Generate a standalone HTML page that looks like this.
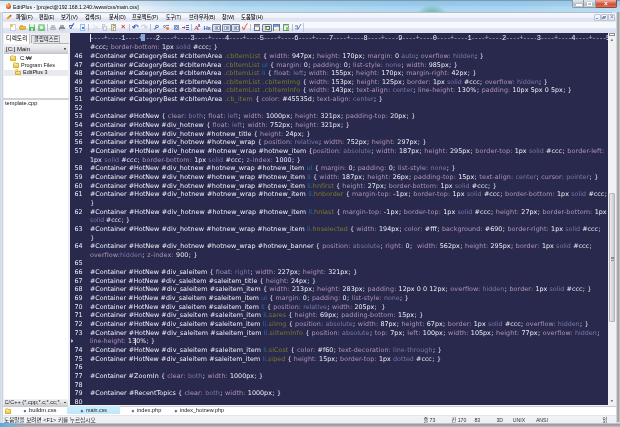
<!DOCTYPE html>
<html lang="ko">
<head>
<meta charset="utf-8">
<title>EditPlus</title>
<style>
html,body{margin:0;padding:0;}
body{width:620px;height:427px;overflow:hidden;position:relative;background:#c9dcee;font-family:"Liberation Sans","Noto Sans CJK KR","NanumGothic",sans-serif;}
.abs,.abs div,.abs span{position:absolute;}
span.nw{white-space:nowrap;}
#frame{left:0;top:0;width:620px;height:427px;background:linear-gradient(90deg,#e0ebf6 0px,#d6e7f4 140px,#acd6f0 235px,#9dceee 420px,#9fcfee 520px,#add6ef 620px);}
#frameR{left:612px;top:12px;width:8px;height:415px;background:linear-gradient(90deg,#dcdde0,#d2d3d7 4.6px,#909297 6px,#b4b6ba 7px,#c6c8cc);}
#frameB{left:0;top:422.4px;width:620px;height:5px;background:linear-gradient(#e2e4ea,#c0c2c8 1.6px,#8e9096 2.8px,#aeb0b6 3.8px,#b8bac0);}
#frameBL{left:0;top:423.4px;width:24px;height:3.6px;background:linear-gradient(90deg,#58a8d8,#6db3e0 7px,rgba(109,179,224,0));}
#frameL{left:0;top:12px;width:3.4px;height:415px;background:linear-gradient(90deg,#c6d4e2,#e4ecf4 2px,#9aa6b2 3.4px);}
#titleglow{left:0;top:0;width:170px;height:12.6px;background:linear-gradient(90deg,rgba(255,255,255,.6),rgba(255,255,255,.5) 120px,rgba(255,255,255,0));}
#title{top:2.7px;font-size:5.9px;line-height:8px;color:#000;white-space:nowrap;}
#client{left:3.4px;top:12.6px;width:612.4px;height:410.2px;background:#f0f0f0;}
#menubar{left:3.4px;top:12.6px;width:612.4px;height:9.4px;background:linear-gradient(#f6f8fd,#f1f3fa 48%,#e1e5f2 56%,#dfe3f1 90%,#e8ebf5);}
.mi{font-weight:500;top:1.9px;font-size:5.8px;line-height:7px;color:#000;white-space:nowrap;}
#toolbar{left:3.4px;top:22px;width:612.4px;height:11.2px;background:linear-gradient(#f8f9fd,#f5f7fc 52%,#e0e4f1 60%,#dde1f0);}
#left{left:3.4px;top:32.7px;width:65.2px;height:373.2px;background:#eef0f5;}
#editor{left:70px;top:33px;width:538.1px;height:372px;background:#28294d;overflow:hidden;}
#code{left:0;top:0;width:620px;height:406px;will-change:transform;}
.r{left:0;height:8.65px;line-height:8.65px;white-space:pre;font-family:"DejaVu Sans","Liberation Sans",sans-serif;font-size:6.36px;color:#efeff6;}
.r .n{left:74.5px;top:0;}
.r .t{top:0;}
.r span span,.r i{position:static;font-style:normal}
.r{word-spacing:0.034em}
.r i.s{margin:0 0.0585em}
.c{color:#7c7b2c}.e{color:#2570ae}.p{color:#b293b5}.k{color:#7a76a4}
#ruler{will-change:transform;left:89.6px;top:33.6px;height:8px;line-height:8px;font-family:"Liberation Mono",monospace;font-size:7px;letter-spacing:-0.74px;color:#b4b4cc;white-space:pre;}
#ruler b{font-weight:normal;color:#f4f4fa}
#vscroll{left:608.1px;top:32.7px;width:7.6px;height:373.2px;background:#f1f1f3;}
#tabs{left:3.4px;top:405.6px;width:612.4px;height:9.8px;background:#fff;}
#status{left:3.4px;top:415.2px;width:612.4px;height:7.6px;background:linear-gradient(#dcdee6,#f1f2f6 1.2px,#eeeff4);}
#menubar,#left,#tabs,#status,#title,#winbtn,#ticon{filter:blur(0.2px)}
</style>
</head>
<body>
<div id="frame" class="abs"></div>
<div id="titleglow" class="abs"></div>
<div class="abs" style="left:0;top:0;width:620px;height:12.4px;background:linear-gradient(rgba(60,120,180,.14),rgba(60,120,180,.05) 45%,rgba(255,255,255,.12) 60%,rgba(255,255,255,.2))"></div>
<div class="abs" style="left:418px;top:4.6px;width:28px;height:8px;background:radial-gradient(ellipse at 50% 100%,rgba(96,170,140,.75),rgba(96,170,140,.35) 45%,rgba(96,170,140,0) 72%)"></div>
<div class="abs" style="left:0;top:0;width:620px;height:0.9px;background:#7f9bb0"></div>
<div class="abs" style="left:2.6px;top:11.6px;width:614px;height:1px;background:#aebccb"></div>
<div id="frameL" class="abs"></div>
<div id="frameR" class="abs"></div>
<div id="frameB" class="abs"></div>
<div id="frameBL" class="abs"></div>
<div id="title" class="abs" style="left:12.9px;transform-origin:0 50%;transform:scaleX(0.8793)">EditPlus - [project@192.168.1.240:/www/css/main.css]</div>
<div id="ticon" class="abs" style="left:5.4px;top:3px;width:6px;height:6.4px"><div style="left:0.2px;top:1.4px;width:5.4px;height:4.6px;border-radius:50% 50% 45% 45%;background:radial-gradient(circle at 40% 35%,#f7c46a,#e0502a 60%,#b8321c)"></div><div style="left:2.6px;top:0;width:2.4px;height:2px;background:#d8a030;border-radius:50%"></div></div>
<div id="winbtn" class="abs" style="left:0;top:0;width:620px;height:12px"><div style="left:572.4px;top:0.0px;width:12.0px;height:7.8px;background:linear-gradient(#e2e7ec,#c6ced5 45%,#b5bec7 55%,#c9d1d8);border:0.6px solid #8d99a6;border-top:0;border-radius:0 0 0 2px;box-sizing:border-box"><div style="left:2.8px;top:4.0px;width:5.6px;height:1.6px;background:#fff;box-shadow:0 0 0.8px #4a545e"></div></div><div style="left:584.4px;top:0.0px;width:11.6px;height:7.8px;background:linear-gradient(#e2e7ec,#c6ced5 45%,#b5bec7 55%,#c9d1d8);border:0.6px solid #8d99a6;border-top:0;border-left:0;box-sizing:border-box"><div style="left:2.8px;top:2.0px;width:5.2px;height:3.8px;border:1px solid #fff;box-shadow:0 0 0.8px #4a545e;box-sizing:border-box"></div></div><div style="left:596.0px;top:0.0px;width:20.6px;height:7.8px;background:linear-gradient(#ecb4a8,#dc6a52 45%,#cf4a30 55%,#da7056);border:0.6px solid #8a4a40;border-top:0;border-left:0;border-radius:0 0 2px 0;box-sizing:border-box"><span style="left:8px;top:-0.4px;font-size:6.4px;line-height:8px;color:#fff;font-weight:bold;font-family:'Liberation Sans',sans-serif">×</span></div></div>
<div id="client" class="abs"></div>
<div id="menubar" class="abs">
<div style="left:2.6px;top:1.6px;width:6.0px;height:6.4px;"><div style="left:0.0px;top:2.2px;width:6.2px;height:2.0px;background:linear-gradient(90deg,#f0b040,#e08830 60%,#b05020);transform:rotate(-42deg);border-radius:1px"></div></div><span class="mi" style="left:13.0px;transform-origin:0 50%;transform:scaleX(0.9238)">파일(F)</span><span class="mi" style="left:36.0px;transform-origin:0 50%;transform:scaleX(0.8421)">편집(E)</span><span class="mi" style="left:57.8px;transform-origin:0 50%;transform:scaleX(0.9127)">보기(V)</span><span class="mi" style="left:82.1px;transform-origin:0 50%;transform:scaleX(0.8801)">검색(S)</span><span class="mi" style="left:105.2px;transform-origin:0 50%;transform:scaleX(0.8975)">문서(D)</span><span class="mi" style="left:129.1px;transform-origin:0 50%;transform:scaleX(0.9015)">프로젝트(P)</span><span class="mi" style="left:162.6px;transform-origin:0 50%;transform:scaleX(0.8297)">도구(T)</span><span class="mi" style="left:185.3px;transform-origin:0 50%;transform:scaleX(0.9049)">브라우저(B)</span><span class="mi" style="left:218.6px;transform-origin:0 50%;transform:scaleX(0.8520)">창(W)</span><span class="mi" style="left:237.6px;transform-origin:0 50%;transform:scaleX(0.9149)">도움말(H)</span><div style="left:590.2px;top:1.4px;width:7.0px;height:7.0px;background:linear-gradient(#fafbfe,#dfe6f2);border:0.5px solid #b8c4d8;box-sizing:border-box;border-radius:1px"></div><div style="left:597.6px;top:1.4px;width:7.0px;height:7.0px;background:linear-gradient(#fafbfe,#dfe6f2);border:0.5px solid #b8c4d8;box-sizing:border-box;border-radius:1px"></div><div style="left:605.0px;top:1.4px;width:7.0px;height:7.0px;background:linear-gradient(#fafbfe,#dfe6f2);border:0.5px solid #b8c4d8;box-sizing:border-box;border-radius:1px"></div><div style="left:592.2px;top:5.8px;width:2.6px;height:0.9px;background:#8a98b4"></div><div style="left:599.8px;top:3.4px;width:2.6px;height:2.4px;border:0.7px solid #8a98b4;box-sizing:border-box"></div><div style="left:599.0px;top:4.4px;width:2.6px;height:2.4px;border:0.7px solid #8a98b4;box-sizing:border-box;background:#eef"></div><span style="left:606.6px;top:0.9px;font-size:6.4px;line-height:7px;color:#8a98b4;font-weight:bold">×</span>
</div>
<div id="toolbar" class="abs"><div id="tbi" style="left:0;top:0;width:612px;height:11px;filter:blur(0.3px)">
<div style="left:1.2px;top:2.0px;width:0.8px;height:7.4px;background:repeating-linear-gradient(#a8b0c4 0 0.7px,transparent 0.7px 1.6px)"></div><div style="left:6.8px;top:2.4px;width:5.4px;height:6.6px;background:#fff;border:0.5px solid #ccd0dc;box-sizing:border-box"><div style="left:-1.2px;top:-1.0px;width:2.8px;height:2.8px;background:#f2c23c;border-radius:50%"></div></div><div style="left:16.0px;top:2.4px;width:6.6px;height:6.6px;"><div style="left:0.0px;top:1.4px;width:6.6px;height:4.6px;background:linear-gradient(#f6d860,#d9a520);border-radius:1px;border:0.4px solid #d4a838;box-sizing:border-box"></div><div style="left:0.4px;top:0.4px;width:3.0px;height:1.6px;background:#e2b030;border-radius:1px 1px 0 0"></div></div><div style="left:25.6px;top:2.4px;width:6.4px;height:6.6px;background:linear-gradient(#7fcf84,#49a854);border-radius:1px"><div style="left:1.4px;top:0.0px;width:3.4px;height:2.4px;background:#e4f4e4"></div><div style="left:1.8px;top:4.0px;width:2.6px;height:2.4px;background:#c4e4c6"></div></div><div style="left:34.6px;top:2.4px;width:6.8px;height:6.6px;background:linear-gradient(#a4dca6,#6cbc74);border-radius:1px"><div style="left:1.6px;top:1.4px;width:3.6px;height:3.6px;background:#eef8ee;border-radius:1px"></div></div><div style="left:43.3px;top:2.0px;width:0.7px;height:7.4px;background:#b9c0d0"></div><div style="left:46.2px;top:2.4px;width:6.4px;height:6.6px;"><div style="left:0.4px;top:2.4px;width:5.8px;height:3.0px;background:#c9ccd6;border:0.4px solid #aeb2c0;box-sizing:border-box;border-radius:1px"></div><div style="left:1.4px;top:0.6px;width:3.6px;height:2.0px;background:#f4f4f8;border:0.3px solid #c4c4cc;box-sizing:border-box"></div></div><div style="left:55.6px;top:2.4px;width:6.8px;height:6.6px;"><div style="left:0.4px;top:2.2px;width:6.0px;height:3.4px;background:#8d909c;border:0.4px solid #7a7e8c;box-sizing:border-box;border-radius:1px"></div><div style="left:1.4px;top:0.4px;width:3.8px;height:2.2px;background:#e8e8ee;border:0.3px solid #aaa;box-sizing:border-box"></div><div style="left:1.0px;top:5.0px;width:4.6px;height:1.2px;background:#d8d8de"></div></div><div style="left:65.4px;top:2.4px;width:7.0px;height:6.6px;"><span style="left:0.2px;top:-1.6px;font-size:7.4px;line-height:8px;font-weight:bold;color:#2a50b0">✓</span><div style="left:0.0px;top:0.4px;width:4.4px;height:1.6px;background:#3a66c4;border-radius:1px"></div></div><div style="left:76.2px;top:2.4px;width:5.8px;height:6.6px;background:#eaf2fc;border:0.9px solid #9cc0ec;box-sizing:border-box"><div style="left:1.2px;top:1.4px;width:1.8px;height:2.4px;background:#4a86d8"></div></div><div style="left:84.5px;top:2.0px;width:0.7px;height:7.4px;background:#b9c0d0"></div><div style="left:89.6px;top:2.4px;width:4.0px;height:6.6px;opacity:.45"><span style="left:0;top:-1px;font-size:6px;line-height:8px;color:#8a90a8">✂</span></div><div style="left:98.2px;top:2.4px;width:5.4px;height:6.6px;opacity:.5"><div style="left:0.0px;top:0.0px;width:3.4px;height:4.4px;border:0.5px solid #9aa0b8;box-sizing:border-box;background:#f4f6fb"></div><div style="left:1.8px;top:1.8px;width:3.4px;height:4.4px;border:0.5px solid #9aa0b8;box-sizing:border-box;background:#f4f6fb"></div></div><div style="left:107.4px;top:2.4px;width:5.6px;height:6.6px;background:#efe6c0;border:0.6px solid #b8aa74;box-sizing:border-box;border-radius:0.6px"><div style="left:1.0px;top:-0.8px;width:2.6px;height:1.4px;background:#9a9a8a"></div><div style="left:1.0px;top:1.6px;width:3.2px;height:3.6px;background:#fff;border:0.3px solid #aaa;box-sizing:border-box"></div></div><div style="left:117.4px;top:2.4px;width:5.4px;height:6.6px;"><span style="left:0.2px;top:-1.2px;font-size:7.6px;line-height:8px;font-weight:bold;color:#d43a3a">×</span></div><div style="left:125.5px;top:2.0px;width:0.7px;height:7.4px;background:#b9c0d0"></div><div style="left:128.6px;top:2.4px;width:5.8px;height:6.6px;"><span style="left:-0.2px;top:-1.4px;font-size:8px;line-height:8px;font-weight:bold;color:#2a60c0;margin-top:0.8px">↶</span></div><div style="left:138.2px;top:2.4px;width:5.8px;height:6.6px;opacity:.5"><span style="left:-0.2px;top:-1.4px;font-size:8px;line-height:8px;font-weight:bold;color:#9aa4b8;margin-top:0.8px">↷</span></div><div style="left:147.1px;top:2.0px;width:0.7px;height:7.4px;background:#b9c0d0"></div><div style="left:150.4px;top:2.4px;width:5.2px;height:6.6px;"><div style="left:1.6px;top:0.2px;width:3.4px;height:3.4px;border:0.9px solid #3a66b8;border-radius:50%;box-sizing:border-box;background:#dfeaf8"></div><div style="left:0.2px;top:4.0px;width:2.6px;height:1.0px;background:#3a66b8;transform:rotate(-45deg)"></div></div><div style="left:159.6px;top:2.4px;width:6.2px;height:6.6px;"><div style="left:0.0px;top:0.4px;width:3.0px;height:3.0px;border:0.8px solid #4a76c0;border-radius:50%;box-sizing:border-box"></div><div style="left:2.6px;top:2.6px;width:3.4px;height:3.2px;background:#e8883a;border-radius:1px"></div><div style="left:3.4px;top:0.6px;width:2.4px;height:1.0px;background:#5a86d0"></div></div><div style="left:169.8px;top:2.4px;width:5.8px;height:6.6px;"><div style="left:0.6px;top:0.6px;width:5.0px;height:5.4px;background:#dfe8f6;border:0.5px solid #7a96c8;box-sizing:border-box"></div><div style="left:2.0px;top:2.0px;width:2.6px;height:2.6px;border:0.7px solid #4a76c0;border-radius:50%;box-sizing:border-box"></div></div><div style="left:179.0px;top:2.4px;width:6.6px;height:6.6px;"><div style="left:0.0px;top:2.6px;width:3.0px;height:1.0px;background:#d04040"></div><div style="left:1.6px;top:1.6px;width:1.6px;height:3.0px;background:#d04040;clip-path:polygon(0 0,100% 50%,0 100%)"></div><div style="left:3.8px;top:0.6px;width:2.8px;height:0.8px;background:#4a66b0"></div><div style="left:3.8px;top:2.6px;width:2.8px;height:0.8px;background:#4a66b0"></div><div style="left:3.8px;top:4.6px;width:2.8px;height:0.8px;background:#4a66b0"></div></div><div style="left:187.7px;top:2.0px;width:0.7px;height:7.4px;background:#b9c0d0"></div><div style="left:190.6px;top:2.4px;width:5.8px;height:6.6px;"><span style="left:0;top:-0.6px;font-size:7px;line-height:8px;font-weight:bold;color:#d0405a;font-family:'Liberation Serif',serif">A</span><span style="left:3.8px;top:-2px;font-size:4.6px;line-height:8px;font-weight:bold;color:#3a5ab8">a</span></div><div style="left:200.2px;top:2.4px;width:6.6px;height:6.6px;"><span style="left:0;top:-0.4px;font-size:6px;line-height:8px;font-weight:bold;color:#3a5ab8;letter-spacing:-0.4px">Hx</span></div><div style="left:208.7px;top:1.6px;width:9.2px;height:8.0px;background:linear-gradient(#dfe6f6,#cfd9ee);border:0.8px solid #6e7890;box-sizing:border-box;border-radius:1px"><div style="left:1.6px;top:1.2px;width:5.0px;height:4.4px;background:#f6f8fc;border:0.5px solid #a4aec6;box-sizing:border-box"></div><div style="left:3.0px;top:2.6px;width:2.2px;height:1.6px;background:#8a96b4"></div></div><div style="left:218.2px;top:1.6px;width:9.2px;height:8.0px;background:linear-gradient(#dfe6f6,#cfd9ee);border:0.8px solid #6e7890;box-sizing:border-box;border-radius:1px"><div style="left:1.6px;top:1.2px;width:5.0px;height:4.4px;background:#f6f8fc;border:0.5px solid #a4aec6;box-sizing:border-box"></div><div style="left:3.0px;top:2.6px;width:2.2px;height:1.6px;background:#8a96b4"></div></div><div style="left:227.8px;top:1.6px;width:9.2px;height:8.0px;background:linear-gradient(#dfe6f6,#cfd9ee);border:0.8px solid #6e7890;box-sizing:border-box;border-radius:1px"><div style="left:1.6px;top:1.2px;width:5.0px;height:4.4px;background:#f6f8fc;border:0.5px solid #a4aec6;box-sizing:border-box"></div><div style="left:3.0px;top:2.6px;width:2.2px;height:1.6px;background:#8a96b4"></div></div><div style="left:238.8px;top:2.4px;width:6.4px;height:6.6px;"><span style="left:-0.4px;top:-1.4px;font-size:8.6px;line-height:8px;font-weight:bold;color:#e0562a">✓</span></div><div style="left:247.1px;top:2.0px;width:0.7px;height:7.4px;background:#b9c0d0"></div><div style="left:250.4px;top:2.4px;width:6.6px;height:6.6px;background:#fbf6d8;border:0.7px solid #6a7088;box-sizing:border-box"><div style="left:0.0px;top:0.0px;width:5.2px;height:1.2px;background:#9aa8c8"></div></div><div style="left:258.9px;top:1.6px;width:9.3px;height:8.0px;background:linear-gradient(#dfe6f6,#cfd9ee);border:0.8px solid #6e7890;box-sizing:border-box;border-radius:1px"><div style="left:1.4px;top:1.2px;width:5.4px;height:4.6px;background:#f4f2c8;border:0.6px solid #5a6a54;box-sizing:border-box"></div><div style="left:2.0px;top:2.6px;width:2.0px;height:2.6px;background:#7ab86a"></div></div><div style="left:269.8px;top:2.4px;width:6.4px;height:6.6px;background:#fbf6d8;border:0.7px solid #5a78b8;box-sizing:border-box"><div style="left:0.0px;top:0.0px;width:5.2px;height:1.4px;background:#7aa0e0"></div><div style="left:0.0px;top:4.0px;width:5.2px;height:1.4px;background:#f0e0a0"></div></div><div style="left:279.4px;top:2.4px;width:6.6px;height:6.6px;background:#eef8e4;border:0.7px solid #6a9a6a;box-sizing:border-box"><div style="left:2.6px;top:1.4px;width:2.2px;height:2.8px;background:#86c886"></div><div style="left:0.0px;top:0.0px;width:5.2px;height:1.0px;background:#b8d8b0"></div></div><div style="left:288.3px;top:2.0px;width:0.7px;height:7.4px;background:#b9c0d0"></div><div style="left:291.2px;top:2.4px;width:6.0px;height:6.6px;"><div style="left:0.0px;top:0.4px;width:3.0px;height:2.4px;background:#a8b4d0"></div><div style="left:0.0px;top:3.4px;width:3.0px;height:2.4px;background:#a8b4d0"></div><span style="left:2.2px;top:-1.2px;font-size:6.4px;line-height:8px;font-weight:bold;color:#3a5ab8">✓</span></div><div style="left:300.0px;top:1.2px;width:0.6px;height:8.6px;background:#c4cada"></div>
</div></div>
<div id="left" class="abs">
<div style="left:0.0px;top:0.0px;width:65.2px;height:11.6px;background:#ecedf1"></div><div style="left:0.8px;top:0.9px;width:25.8px;height:10.6px;background:#fff;border-right:0.6px solid #c4c6cc;box-sizing:border-box"><span class="nw" style="left:1.9px;top:1.4px;font-size:5.8px;line-height:7px;color:#000;transform-origin:0 50%;transform:scaleX(1.0120)">디렉토리</span></div><div style="left:27.8px;top:2.7px;width:29.2px;height:8.0px;background:#e6e6ea;border:0.6px solid #a8aab2;border-bottom:0;box-sizing:border-box"><span class="nw" style="left:1.6px;top:-0.4px;font-size:5.8px;line-height:7px;color:#111;transform-origin:0 50%;transform:scaleX(0.9223)">클립텍스트</span></div><div style="left:30.0px;top:10.7px;width:35.2px;height:0.6px;background:#b4b6be"></div><div style="left:0.4px;top:11.5px;width:64.6px;height:9.4px;background:linear-gradient(#f3f3f5,#e6e6ea 45%,#d2d2d7 80%,#c2c2c8)"><span class="nw" style="left:2px;top:0.7px;font-size:6.2px;line-height:7px;color:#111;transform-origin:0 50%;transform:scaleX(0.9691)">[C:] Main</span><div style="left:59.8px;top:4.0px;width:2.8px;height:1.7px;background:#222;clip-path:polygon(0 0,100% 0,50% 100%)"></div></div><div style="left:0.4px;top:20.9px;width:64.6px;height:44.0px;background:#fff"></div><div style="left:0.6px;top:36.9px;width:64.2px;height:6.4px;background:#e9eaee"></div><div style="left:7.0px;top:22.3px;width:5.8px;height:6.0px;"><div style="left:0.0px;top:1.2px;width:5.8px;height:4.8px;background:linear-gradient(#fbe98a,#e9c84a);border-radius:0.8px;border:0.3px solid #d4b040;box-sizing:border-box"></div><div style="left:0.2px;top:0.0px;width:3.0px;height:2.0px;background:#f3d870;border-radius:0.8px 0.8px 0 0"></div></div><span class="nw" style="left:16.3px;top:21.1px;font-size:6.1px;line-height:7px;color:#111;transform-origin:0 50%;transform:scaleX(0.9866)">C:₩</span><div style="left:9.4px;top:29.1px;width:5.8px;height:6.0px;"><div style="left:0.0px;top:1.2px;width:5.8px;height:4.8px;background:linear-gradient(#fbe98a,#e9c84a);border-radius:0.8px;border:0.3px solid #d4b040;box-sizing:border-box"></div><div style="left:0.2px;top:0.0px;width:3.0px;height:2.0px;background:#f3d870;border-radius:0.8px 0.8px 0 0"></div></div><span class="nw" style="left:18.1px;top:28.0px;font-size:6.1px;line-height:7px;color:#111;transform-origin:0 50%;transform:scaleX(0.8962)">Program Files</span><div style="left:11.6px;top:36.7px;width:5.8px;height:6.0px;"><div style="left:0.0px;top:1.2px;width:5.8px;height:4.8px;background:linear-gradient(#fbe98a,#e9c84a);border-radius:0.8px;border:0.3px solid #d4b040;box-sizing:border-box"></div><div style="left:0.2px;top:0.0px;width:3.0px;height:2.0px;background:#f3d870;border-radius:0.8px 0.8px 0 0"></div></div><span class="nw" style="left:20.0px;top:35.5px;font-size:6.1px;line-height:7px;color:#111;transform-origin:0 50%;transform:scaleX(0.8929)">EditPlus 3</span><div style="left:0.0px;top:64.9px;width:65.2px;height:2.4px;background:#d0d2d8"></div><div style="left:0.4px;top:67.3px;width:64.6px;height:299.2px;background:#fff"></div><span class="nw" style="left:1.2px;top:66.4px;font-size:6.1px;line-height:7px;color:#111;transform-origin:0 50%;transform:scaleX(0.9258)">template.cpp</span><div style="left:0.4px;top:366.5px;width:64.6px;height:6.6px;background:linear-gradient(#f3f3f5,#e2e2e6 50%,#cdcdd2)"><span class="nw" style="left:0.8px;top:-0.2px;font-size:5.6px;line-height:7px;color:#222;width:58px;overflow:hidden">C/C++ (*.cpp;*.c;*.cc;*.</span><div style="left:59.8px;top:2.6px;width:2.8px;height:1.7px;background:#222;clip-path:polygon(0 0,100% 0,50% 100%)"></div></div>
</div>
<div id="editor" class="abs"></div>
<div id="ruler" class="abs">----+----<b>1</b>----+----<b>2</b>----+----<b>3</b>----+----<b>4</b>----+----<b>5</b>----+----<b>6</b>----+----<b>7</b>----+----<b>8</b>----+----<b>9</b>----+----<b>0</b>----+----<b>1</b>----+----<b>2</b>----+----<b>3</b>----+----<b>4</b>----+----<b>5</b></div>
<div id="rhl" class="abs" style="left:141.4px;top:34.2px;width:3.2px;height:7px;background:#7fa8dc"></div>
<div id="rvl" class="abs" style="left:89.6px;top:33.6px;width:0.8px;height:8.2px;background:#e8e8f0"></div>
<div id="mark" class="abs" style="left:71.2px;top:339px;width:2.2px;height:3.8px;background:#dcdcec;clip-path:polygon(0 0,100% 50%,0 100%)"></div>
<div id="ibeam" class="abs" style="left:135.4px;top:337.6px;width:0.8px;height:7px;background:#c8c8dc"></div>
<div id="code" class="abs">
<div class="r" style="top:43.20px"> <span class="t" style="left:90.2px;transform-origin:0 50%;transform:scaleX(0.9932)">#ccc<i class="s">;</i> <span class="p" style="letter-spacing:0.0150em">border-bottom:</span> 1px <span class="k">solid</span> #ccc<i class="s">;</i> }</span></div>
<div class="r" style="top:51.85px"><span class="n">46</span> <span class="t" style="left:90.2px;transform-origin:0 50%;transform:scaleX(1.0004)">#Container #CategoryBest <span style="letter-spacing:0.0115em">#cbItemArea</span> <span class="c" style="letter-spacing:0.0156em">.cbItemList</span> { <span class="p" style="letter-spacing:0.0195em">width:</span> 947px<i class="s">;</i> <span class="p" style="letter-spacing:0.0167em">height:</span> 170px<i class="s">;</i> <span class="p" style="letter-spacing:0.0167em">margin:</span> 0 <span class="k">auto</span><i class="s">;</i> <span class="p" style="letter-spacing:0.0130em">overflow:</span> <span class="k">hidden</span><i class="s">;</i> }</span></div>
<div class="r" style="top:60.50px"><span class="n">47</span> <span class="t" style="left:90.2px;transform-origin:0 50%;transform:scaleX(0.9953)">#Container #CategoryBest <span style="letter-spacing:0.0115em">#cbItemArea</span> <span class="c" style="letter-spacing:0.0156em">.cbItemList</span> <span class="e">ul</span> { <span class="p" style="letter-spacing:0.0167em">margin:</span> 0<i class="s">;</i> <span class="p" style="letter-spacing:0.0146em">padding:</span> 0<i class="s">;</i> <span class="p" style="letter-spacing:0.0191em">list-style:</span> <span class="k">none</span><i class="s">;</i> <span class="p" style="letter-spacing:0.0195em">width:</span> 985px<i class="s">;</i> }</span></div>
<div class="r" style="top:69.15px"><span class="n">48</span> <span class="t" style="left:90.2px;transform-origin:0 50%;transform:scaleX(0.9946)">#Container #CategoryBest <span style="letter-spacing:0.0115em">#cbItemArea</span> <span class="c" style="letter-spacing:0.0156em">.cbItemList</span> <span class="e">li</span> { <span class="p" style="letter-spacing:0.0195em">float:</span> <span class="k">left</span><i class="s">;</i> <span class="p" style="letter-spacing:0.0195em">width:</span> 155px<i class="s">;</i> <span class="p" style="letter-spacing:0.0167em">height:</span> 170px<i class="s">;</i> <span class="p" style="letter-spacing:0.0162em">margin-right:</span> 42px<i class="s">;</i> }</span></div>
<div class="r" style="top:77.80px"><span class="n">49</span> <span class="t" style="left:90.2px;transform-origin:0 50%;transform:scaleX(0.9978)">#Container #CategoryBest <span style="letter-spacing:0.0115em">#cbItemArea</span> <span class="c" style="letter-spacing:0.0156em">.cbItemList</span> <span class="c" style="letter-spacing:0.0298em">.cbItemImg</span> { <span class="p" style="letter-spacing:0.0195em">width:</span> 153px<i class="s">;</i> <span class="p" style="letter-spacing:0.0167em">height:</span> 125px<i class="s">;</i> <span class="p" style="letter-spacing:0.0167em">border:</span> 1px <span class="k">solid</span> #ccc<i class="s">;</i> <span class="p" style="letter-spacing:0.0130em">overflow:</span> <span class="k">hidden</span><i class="s">;</i> }</span></div>
<div class="r" style="top:86.45px"><span class="n">50</span> <span class="t" style="left:90.2px;transform-origin:0 50%;transform:scaleX(0.9974)">#Container #CategoryBest <span style="letter-spacing:0.0115em">#cbItemArea</span> <span class="c" style="letter-spacing:0.0156em">.cbItemList</span> <span class="c" style="letter-spacing:0.0271em">.cbItemInfo</span> { <span class="p" style="letter-spacing:0.0195em">width:</span> 143px<i class="s">;</i> <span class="p" style="letter-spacing:0.0191em">text-align:</span> <span class="k">center</span><i class="s">;</i> <span class="p" style="letter-spacing:0.0175em">line-height:</span> <span style="letter-spacing:0.0315em">130%</span><i class="s">;</i> <span class="p" style="letter-spacing:0.0146em">padding:</span> 10px 5px 0 5px<i class="s">;</i> }</span></div>
<div class="r" style="top:95.10px"><span class="n">51</span> <span class="t" style="left:90.2px;transform-origin:0 50%;transform:scaleX(1.0017)">#Container #CategoryBest <span style="letter-spacing:0.0115em">#cbItemArea</span> <span class="c" style="letter-spacing:0.0227em">.cb_item</span> { <span class="p" style="letter-spacing:0.0195em">color:</span> #45535d<i class="s">;</i> <span class="p" style="letter-spacing:0.0191em">text-align:</span> <span class="k">center</span><i class="s">;</i> }</span></div>
<div class="r" style="top:103.75px"><span class="n">52</span> <span class="t" style="left:90.2px"></span></div>
<div class="r" style="top:112.40px"><span class="n">53</span> <span class="t" style="left:90.2px;transform-origin:0 50%;transform:scaleX(1.0030)">#Container #HotNew { <span class="p" style="letter-spacing:0.0195em">clear:</span> <span class="k">both</span><i class="s">;</i> <span class="p" style="letter-spacing:0.0195em">float:</span> <span class="k">left</span><i class="s">;</i> <span class="p" style="letter-spacing:0.0195em">width:</span> 1000px<i class="s">;</i> <span class="p" style="letter-spacing:0.0167em">height:</span> 321px<i class="s">;</i> <span class="p" style="letter-spacing:0.0175em">padding-top:</span> 20px<i class="s">;</i> }</span></div>
<div class="r" style="top:121.05px"><span class="n">54</span> <span class="t" style="left:90.2px;transform-origin:0 50%;transform:scaleX(1.0014)">#Container #HotNew <span style="letter-spacing:0.0124em">#div_hotnew</span> { <span class="p" style="letter-spacing:0.0195em">float:</span> <span class="k">left</span><i class="s">;</i> <span class="p" style="letter-spacing:0.0195em">width:</span> 752px<i class="s">;</i> <span class="p" style="letter-spacing:0.0167em">height:</span> 321px<i class="s">;</i> }</span></div>
<div class="r" style="top:129.70px"><span class="n">55</span> <span class="t" style="left:90.2px;transform-origin:0 50%;transform:scaleX(1.0000)">#Container #HotNew <span style="letter-spacing:0.0124em">#div_hotnew</span> <span style="letter-spacing:0.0105em">#hotnew_title</span> { <span class="p" style="letter-spacing:0.0167em">height:</span> 24px<i class="s">;</i> }</span></div>
<div class="r" style="top:138.35px"><span class="n">56</span> <span class="t" style="left:90.2px;transform-origin:0 50%;transform:scaleX(1.0049)">#Container #HotNew <span style="letter-spacing:0.0124em">#div_hotnew</span> <span style="letter-spacing:0.0113em">#hotnew_wrap</span> { <span class="p" style="letter-spacing:0.0130em">position:</span> <span class="k">relative</span><i class="s">;</i> <span class="p" style="letter-spacing:0.0195em">width:</span> 752px<i class="s">;</i> <span class="p" style="letter-spacing:0.0167em">height:</span> 297px<i class="s">;</i> }</span></div>
<div class="r" style="top:147.00px"><span class="n">57</span> <span class="t" style="left:90.2px;transform-origin:0 50%;transform:scaleX(1.0097)">#Container #HotNew <span style="letter-spacing:0.0124em">#div_hotnew</span> <span style="letter-spacing:0.0113em">#hotnew_wrap</span> <span style="letter-spacing:0.0113em">#hotnew_item</span> {<span class="p" style="letter-spacing:0.0130em">position:</span> <span class="k">absolute</span><i class="s">;</i> <span class="p" style="letter-spacing:0.0195em">width:</span> 187px<i class="s">;</i> <span class="p" style="letter-spacing:0.0167em">height:</span> 295px<i class="s">;</i> <span class="p" style="letter-spacing:0.0191em">border-top:</span> 1px <span class="k">solid</span> #ccc<i class="s">;</i> <span class="p" style="letter-spacing:0.0175em">border-left:</span></span></div>
<div class="r" style="top:155.65px"> <span class="t" style="left:90.2px;transform-origin:0 50%;transform:scaleX(1.0046)">1px <span class="k">solid</span> #ccc<i class="s">;</i> <span class="p" style="letter-spacing:0.0150em">border-bottom:</span> 1px <span class="k">solid</span> #ccc<i class="s">;</i> <span class="p" style="letter-spacing:0.0263em">z-index:</span> 1000<i class="s">;</i> }</span></div>
<div class="r" style="top:164.30px"><span class="n">58</span> <span class="t" style="left:90.2px;transform-origin:0 50%;transform:scaleX(1.0004)">#Container #HotNew <span style="letter-spacing:0.0124em">#div_hotnew</span> <span style="letter-spacing:0.0113em">#hotnew_wrap</span> <span style="letter-spacing:0.0113em">#hotnew_item</span> <span class="e">ul</span> { <span class="p" style="letter-spacing:0.0167em">margin:</span> 0<i class="s">;</i> <span class="p" style="letter-spacing:0.0146em">padding:</span> 0<i class="s">;</i> <span class="p" style="letter-spacing:0.0191em">list-style:</span> <span class="k">none</span><i class="s">;</i> }</span></div>
<div class="r" style="top:172.95px"><span class="n">59</span> <span class="t" style="left:90.2px;transform-origin:0 50%;transform:scaleX(1.0032)">#Container #HotNew <span style="letter-spacing:0.0124em">#div_hotnew</span> <span style="letter-spacing:0.0113em">#hotnew_wrap</span> <span style="letter-spacing:0.0113em">#hotnew_item</span> <span class="e">li</span> { <span class="p" style="letter-spacing:0.0195em">width:</span> 187px<i class="s">;</i> <span class="p" style="letter-spacing:0.0167em">height:</span> 26px<i class="s">;</i> <span class="p" style="letter-spacing:0.0175em">padding-top:</span> 15px<i class="s">;</i> <span class="p" style="letter-spacing:0.0191em">text-align:</span> <span class="k">center</span><i class="s">;</i> <span class="p" style="letter-spacing:0.0167em">cursor:</span> <span class="k">pointer</span><i class="s">;</i> }</span></div>
<div class="r" style="top:181.60px"><span class="n">60</span> <span class="t" style="left:90.2px;transform-origin:0 50%;transform:scaleX(1.0033)">#Container #HotNew <span style="letter-spacing:0.0124em">#div_hotnew</span> <span style="letter-spacing:0.0113em">#hotnew_wrap</span> <span style="letter-spacing:0.0113em">#hotnew_item</span> <span class="e">li</span><span class="c" style="letter-spacing:0.0057em">.hnfirst</span> { <span class="p" style="letter-spacing:0.0167em">height:</span> 27px<i class="s">;</i> <span class="p" style="letter-spacing:0.0150em">border-bottom:</span> 1px <span class="k">solid</span> #ccc<i class="s">;</i> }</span></div>
<div class="r" style="top:190.25px"><span class="n">61</span> <span class="t" style="left:90.2px;transform-origin:0 50%;transform:scaleX(1.0078)">#Container #HotNew <span style="letter-spacing:0.0124em">#div_hotnew</span> <span style="letter-spacing:0.0113em">#hotnew_wrap</span> <span style="letter-spacing:0.0113em">#hotnew_item</span> <span class="e">li</span><span class="c" style="letter-spacing:0.0051em">.hnborder</span> { <span class="p" style="letter-spacing:0.0191em">margin-top:</span> <span style="letter-spacing:0.0232em">-1px</span><i class="s">;</i> <span class="p" style="letter-spacing:0.0191em">border-top:</span> 1px <span class="k">solid</span> #ccc<i class="s">;</i> <span class="p" style="letter-spacing:0.0150em">border-bottom:</span> 1px <span class="k">solid</span> #ccc<i class="s">;</i></span></div>
<div class="r" style="top:198.90px"> <span class="t" style="left:90.2px">}</span></div>
<div class="r" style="top:207.55px"><span class="n">62</span> <span class="t" style="left:90.2px;transform-origin:0 50%;transform:scaleX(1.0086)">#Container #HotNew <span style="letter-spacing:0.0124em">#div_hotnew</span> <span style="letter-spacing:0.0113em">#hotnew_wrap</span> <span style="letter-spacing:0.0113em">#hotnew_item</span> <span class="e">li</span><span class="c" style="letter-spacing:0.0066em">.hnlast</span> { <span class="p" style="letter-spacing:0.0191em">margin-top:</span> <span style="letter-spacing:0.0232em">-1px</span><i class="s">;</i> <span class="p" style="letter-spacing:0.0191em">border-top:</span> 1px <span class="k">solid</span> #ccc<i class="s">;</i> <span class="p" style="letter-spacing:0.0167em">height:</span> 27px<i class="s">;</i> <span class="p" style="letter-spacing:0.0150em">border-bottom:</span> 1px</span></div>
<div class="r" style="top:216.20px"> <span class="t" style="left:90.2px;transform-origin:0 50%;transform:scaleX(0.9473)"><span class="k">solid</span> #ccc<i class="s">;</i> }</span></div>
<div class="r" style="top:224.85px"><span class="n">63</span> <span class="t" style="left:90.2px;transform-origin:0 50%;transform:scaleX(1.0019)">#Container #HotNew <span style="letter-spacing:0.0124em">#div_hotnew</span> <span style="letter-spacing:0.0113em">#hotnew_wrap</span> <span style="letter-spacing:0.0113em">#hotnew_item</span> <span class="e">li</span><span class="c" style="letter-spacing:0.0042em">.hnselected</span> { <span class="p" style="letter-spacing:0.0195em">width:</span> 194px<i class="s">;</i> <span class="p" style="letter-spacing:0.0195em">color:</span> #fff<i class="s">;</i> <span class="p" style="letter-spacing:0.0106em">background:</span> #690<i class="s">;</i> <span class="p" style="letter-spacing:0.0162em">border-right:</span> 1px <span class="k">solid</span> #ccc<i class="s">;</i></span></div>
<div class="r" style="top:233.50px"> <span class="t" style="left:90.2px">}</span></div>
<div class="r" style="top:242.15px"><span class="n">64</span> <span class="t" style="left:90.2px;transform-origin:0 50%;transform:scaleX(1.0054)">#Container #HotNew <span style="letter-spacing:0.0124em">#div_hotnew</span> <span style="letter-spacing:0.0113em">#hotnew_wrap</span> <span style="letter-spacing:0.0097em">#hotnew_banner</span> { <span class="p" style="letter-spacing:0.0130em">position:</span> <span class="k">absolute</span><i class="s">;</i> <span class="p" style="letter-spacing:0.0195em">right:</span> 0<i class="s">;</i>  <span class="p" style="letter-spacing:0.0195em">width:</span> 562px<i class="s">;</i> <span class="p" style="letter-spacing:0.0167em">height:</span> 295px<i class="s">;</i> <span class="p" style="letter-spacing:0.0167em">border:</span> 1px <span class="k">solid</span> #ccc<i class="s">;</i></span></div>
<div class="r" style="top:250.80px"> <span class="t" style="left:90.2px;transform-origin:0 50%;transform:scaleX(1.0069)"><span class="p" style="letter-spacing:0.0130em">overflow:</span><span class="k">hidden</span><i class="s">;</i> <span class="p" style="letter-spacing:0.0263em">z-index:</span> 900<i class="s">;</i> }</span></div>
<div class="r" style="top:259.45px"><span class="n">65</span> <span class="t" style="left:90.2px"></span></div>
<div class="r" style="top:268.10px"><span class="n">66</span> <span class="t" style="left:90.2px;transform-origin:0 50%;transform:scaleX(0.9979)">#Container #HotNew <span style="letter-spacing:0.0105em">#div_saleitem</span> { <span class="p" style="letter-spacing:0.0195em">float:</span> <span class="k">right</span><i class="s">;</i> <span class="p" style="letter-spacing:0.0195em">width:</span> 227px<i class="s">;</i> <span class="p" style="letter-spacing:0.0167em">height:</span> 321px<i class="s">;</i> }</span></div>
<div class="r" style="top:276.75px"><span class="n">67</span> <span class="t" style="left:90.2px;transform-origin:0 50%;transform:scaleX(0.9917)">#Container #HotNew <span style="letter-spacing:0.0105em">#div_saleitem</span> <span style="letter-spacing:0.0091em">#saleitem_title</span> { <span class="p" style="letter-spacing:0.0167em">height:</span> 24px<i class="s">;</i> }</span></div>
<div class="r" style="top:285.40px"><span class="n">68</span> <span class="t" style="left:90.2px;transform-origin:0 50%;transform:scaleX(1.0006)">#Container #HotNew <span style="letter-spacing:0.0105em">#div_saleitem</span> <span style="letter-spacing:0.0097em">#saleitem_item</span> { <span class="p" style="letter-spacing:0.0195em">width:</span> 213px<i class="s">;</i> <span class="p" style="letter-spacing:0.0167em">height:</span> 283px<i class="s">;</i> <span class="p" style="letter-spacing:0.0146em">padding:</span> 12px 0 0 12px<i class="s">;</i> <span class="p" style="letter-spacing:0.0130em">overflow:</span> <span class="k">hidden</span><i class="s">;</i> <span class="p" style="letter-spacing:0.0167em">border:</span> 1px <span class="k">solid</span> #ccc<i class="s">;</i> }</span></div>
<div class="r" style="top:294.05px"><span class="n">69</span> <span class="t" style="left:90.2px;transform-origin:0 50%;transform:scaleX(0.9904)">#Container #HotNew <span style="letter-spacing:0.0105em">#div_saleitem</span> <span style="letter-spacing:0.0097em">#saleitem_item</span> <span class="e">ul</span> { <span class="p" style="letter-spacing:0.0167em">margin:</span> 0<i class="s">;</i> <span class="p" style="letter-spacing:0.0146em">padding:</span> 0<i class="s">;</i> <span class="p" style="letter-spacing:0.0191em">list-style:</span> <span class="k">none</span><i class="s">;</i> }</span></div>
<div class="r" style="top:302.70px"><span class="n">70</span> <span class="t" style="left:90.2px;transform-origin:0 50%;transform:scaleX(0.9899)">#Container #HotNew <span style="letter-spacing:0.0105em">#div_saleitem</span> <span style="letter-spacing:0.0097em">#saleitem_item</span> <span class="e">li</span> { <span class="p" style="letter-spacing:0.0130em">position:</span> <span class="k">relative</span><i class="s">;</i> <span class="p" style="letter-spacing:0.0195em">width:</span> 205px<i class="s">;</i>  }</span></div>
<div class="r" style="top:311.35px"><span class="n">71</span> <span class="t" style="left:90.2px;transform-origin:0 50%;transform:scaleX(1.0017)">#Container #HotNew <span style="letter-spacing:0.0105em">#div_saleitem</span> <span style="letter-spacing:0.0097em">#saleitem_item</span> <span class="e">li</span><span class="c" style="letter-spacing:0.0077em">.sares</span> { <span class="p" style="letter-spacing:0.0167em">height:</span> 69px<i class="s">;</i> <span class="p" style="letter-spacing:0.0140em">padding-bottom:</span> 15px<i class="s">;</i> }</span></div>
<div class="r" style="top:320.00px"><span class="n">72</span> <span class="t" style="left:90.2px;transform-origin:0 50%;transform:scaleX(0.9988)">#Container #HotNew <span style="letter-spacing:0.0105em">#div_saleitem</span> <span style="letter-spacing:0.0097em">#saleitem_item</span> <span class="e">li</span><span class="c" style="letter-spacing:0.0287em">.siImg</span> { <span class="p" style="letter-spacing:0.0130em">position:</span> <span class="k">absolute</span><i class="s">;</i> <span class="p" style="letter-spacing:0.0195em">width:</span> 87px<i class="s">;</i> <span class="p" style="letter-spacing:0.0167em">height:</span> 67px<i class="s">;</i> <span class="p" style="letter-spacing:0.0167em">border:</span> 1px <span class="k">solid</span> #ccc<i class="s">;</i> <span class="p" style="letter-spacing:0.0130em">overflow:</span> <span class="k">hidden</span><i class="s">;</i> }</span></div>
<div class="r" style="top:328.65px"><span class="n">73</span> <span class="t" style="left:90.2px;transform-origin:0 50%;transform:scaleX(1.0047)">#Container #HotNew <span style="letter-spacing:0.0105em">#div_saleitem</span> <span style="letter-spacing:0.0097em">#saleitem_item</span> <span class="e">li</span><span class="c" style="letter-spacing:0.0271em">.siItemInfo</span> { <span class="p" style="letter-spacing:0.0130em">position:</span> <span class="k">absolute</span><i class="s">;</i> <span class="p" style="letter-spacing:0.0293em">top:</span> 7px<i class="s">;</i> <span class="p" style="letter-spacing:0.0234em">left:</span> 100px<i class="s">;</i> <span class="p" style="letter-spacing:0.0195em">width:</span> 105px<i class="s">;</i> <span class="p" style="letter-spacing:0.0167em">height:</span> 77px<i class="s">;</i> <span class="p" style="letter-spacing:0.0130em">overflow:</span> <span class="k">hidden</span><i class="s">;</i></span></div>
<div class="r" style="top:337.30px"> <span class="t" style="left:90.2px;transform-origin:0 50%;transform:scaleX(0.9568)"><span class="p" style="letter-spacing:0.0175em">line-height:</span> <span style="letter-spacing:0.0315em">130%</span><i class="s">;</i> }</span></div>
<div class="r" style="top:345.95px"><span class="n">74</span> <span class="t" style="left:90.2px;transform-origin:0 50%;transform:scaleX(1.0015)">#Container #HotNew <span style="letter-spacing:0.0105em">#div_saleitem</span> <span style="letter-spacing:0.0097em">#saleitem_item</span> <span class="e">li</span><span class="c" style="letter-spacing:0.0066em">.siCost</span> { <span class="p" style="letter-spacing:0.0195em">color:</span> #f60<i class="s">;</i> <span class="p" style="letter-spacing:0.0131em">text-decoration:</span> <span class="k" style="letter-spacing:0.0077em">line-through</span><i class="s">;</i> }</span></div>
<div class="r" style="top:354.60px"><span class="n">75</span> <span class="t" style="left:90.2px;transform-origin:0 50%;transform:scaleX(0.9969)">#Container #HotNew <span style="letter-spacing:0.0105em">#div_saleitem</span> <span style="letter-spacing:0.0097em">#saleitem_item</span> <span class="e">li</span><span class="c" style="letter-spacing:0.0077em">.siped</span> { <span class="p" style="letter-spacing:0.0167em">height:</span> 15px<i class="s">;</i> <span class="p" style="letter-spacing:0.0191em">border-top:</span> 1px <span class="k">dotted</span> #ccc<i class="s">;</i> }</span></div>
<div class="r" style="top:363.25px"><span class="n">76</span> <span class="t" style="left:90.2px"></span></div>
<div class="r" style="top:371.90px"><span class="n">77</span> <span class="t" style="left:90.2px;transform-origin:0 50%;transform:scaleX(0.9966)">#Container <span style="letter-spacing:0.0180em">#ZoomIn</span> { <span class="p" style="letter-spacing:0.0195em">clear:</span> <span class="k">both</span><i class="s">;</i> <span class="p" style="letter-spacing:0.0195em">width:</span> 1000px<i class="s">;</i> }</span></div>
<div class="r" style="top:380.55px"><span class="n">78</span> <span class="t" style="left:90.2px"></span></div>
<div class="r" style="top:389.20px"><span class="n">79</span> <span class="t" style="left:90.2px;transform-origin:0 50%;transform:scaleX(1.0068)">#Container #RecentTopics { <span class="p" style="letter-spacing:0.0195em">clear:</span> <span class="k">both</span><i class="s">;</i> <span class="p" style="letter-spacing:0.0195em">width:</span> 1000px<i class="s">;</i> }</span></div>
<div class="r" style="top:397.85px"><span class="n">80</span> <span class="t" style="left:90.2px"></span></div>
</div>
<div id="vscroll" class="abs">
<div style="left:0.6px;top:0.6px;width:6.4px;height:2.4px;background:#fff;border:0.5px solid #8a8e9a;box-sizing:border-box"></div><div style="left:2.4px;top:6.4px;width:2.8px;height:1.7px;background:#555;clip-path:polygon(0 100%,100% 100%,50% 0)"></div><div style="left:0.5px;top:160.3px;width:6.6px;height:129.2px;background:linear-gradient(90deg,#ececef,#dcdce0 45%,#c9c9ce);border:0.5px solid #b4b6bc;box-sizing:border-box;border-radius:1px"><div style="left:1.6px;top:63.0px;width:2.6px;height:0.6px;background:#8a8c94"></div><div style="left:1.6px;top:64.4px;width:2.6px;height:0.6px;background:#8a8c94"></div><div style="left:1.6px;top:65.8px;width:2.6px;height:0.6px;background:#8a8c94"></div></div><div style="left:2.4px;top:367.6px;width:2.8px;height:1.7px;background:#555;clip-path:polygon(0 0,100% 0,50% 100%)"></div>
</div>
<div id="tabs" class="abs">
<div style="left:0.0px;top:0.0px;width:612.4px;height:0.6px;background:#c8ccd6"></div><div style="left:1.8px;top:2.0px;width:5.8px;height:6.0px;"><div style="left:0.0px;top:1.2px;width:5.8px;height:4.8px;background:linear-gradient(#fbe98a,#e9c84a);border-radius:0.8px;border:0.3px solid #d4b040;box-sizing:border-box"></div><div style="left:0.2px;top:0.0px;width:3.0px;height:2.0px;background:#f3d870;border-radius:0.8px 0.8px 0 0"></div></div><div style="left:63.4px;top:0.8px;width:53.4px;height:8.0px;background:linear-gradient(#cdeefb,#bfe7f8)"></div><div style="left:21.1px;top:4.4px;width:1.8px;height:1.8px;background:#3a5a9a;transform:rotate(45deg)"></div><span class="nw tb" style="left:25.6px;top:1.6px;font-size:5.9px;line-height:7px;color:#222;transform-origin:0 50%;transform:scaleX(0.9882)">buildm.css</span><div style="left:77.6px;top:4.4px;width:1.8px;height:1.8px;background:#3a5a9a;transform:rotate(45deg)"></div><span class="nw tb" style="left:82.5px;top:1.6px;font-size:5.9px;line-height:7px;color:#222;transform-origin:0 50%;transform:scaleX(0.9032)">main.css</span><div style="left:128.7px;top:4.4px;width:1.8px;height:1.8px;background:#3a5a9a;transform:rotate(45deg)"></div><span class="nw tb" style="left:133.6px;top:1.6px;font-size:5.9px;line-height:7px;color:#222;transform-origin:0 50%;transform:scaleX(0.9506)">index.php</span><div style="left:171.7px;top:4.4px;width:1.8px;height:1.8px;background:#3a5a9a;transform:rotate(45deg)"></div><span class="nw tb" style="left:176.6px;top:1.6px;font-size:5.9px;line-height:7px;color:#222;transform-origin:0 50%;transform:scaleX(0.9263)">index_hotnew.php</span>
</div>
<div id="status" class="abs">
<span class="nw" style="left:0.9px;top:1.4px;font-size:5.5px;line-height:7px;color:#222;transform-origin:0 50%;transform:scaleX(1.0201)">도움말을 보려면 &lt;F1&gt; 키를 누르십시오</span><span class="nw" style="left:420.0px;top:1.5px;font-size:5.2px;line-height:7px;color:#333">줄 73</span><span class="nw" style="left:448.1px;top:1.5px;font-size:5.2px;line-height:7px;color:#333">칸 170</span><span class="nw" style="left:471.1px;top:1.5px;font-size:5.2px;line-height:7px;color:#333">83</span><span class="nw" style="left:493.1px;top:1.5px;font-size:5.2px;line-height:7px;color:#333">3D</span><span class="nw" style="left:509.4px;top:1.5px;font-size:5.2px;line-height:7px;color:#333">UNIX</span><span class="nw" style="left:532.5px;top:1.5px;font-size:5.2px;line-height:7px;color:#333">ANSI</span><span class="nw" style="left:599.2px;top:1.5px;font-size:5.2px;line-height:7px;color:#333">읽</span>
</div>
</body>
</html>
